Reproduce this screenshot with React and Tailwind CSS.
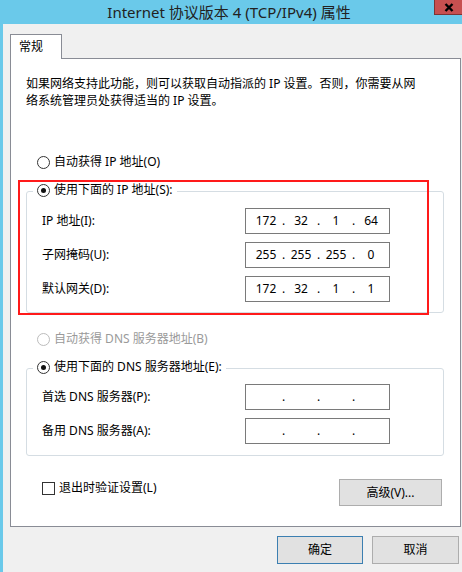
import React from 'react';

const Radio = ({ checked, disabled }) => (
  <span
    className={`w-[13px] h-[13px] rounded-full border flex items-center justify-center bg-white shrink-0 ${
      disabled ? 'border-[#bcbcbc]' : 'border-[#333333]'
    }`}
  >
    {checked && <span className="w-[5px] h-[5px] rounded-full bg-[#111111]" />}
  </span>
);

const IpBox = ({ parts }) => (
  <div className="w-[145px] h-[26px] border border-[#7a7a7a] bg-white flex items-center pl-[7px]">
    {parts.map((p, i) => (
      <React.Fragment key={i}>
        <span className="w-[26px] text-center">{p}</span>
        {i < 3 && <span className="w-[9px] text-center">.</span>}
      </React.Fragment>
    ))}
  </div>
);

const Row = ({ label, parts, first }) => (
  <div className={`flex items-center pl-[15px] pr-[53px] ${first ? '' : 'mt-[8px]'}`}>
    <span>{label}</span>
    <div className="ml-auto">
      <IpBox parts={parts} />
    </div>
  </div>
);

const GroupBox = ({ title, children, className }) => (
  <div className={`ml-[15px] mr-[16px] border border-[#d5dde3] rounded-[3px] ${className}`}>
    <div className="-mt-[10px] ml-[6px] px-[4px] bg-white w-fit h-[16px] flex items-center gap-[4px]">
      <Radio checked />
      <span>{title}</span>
    </div>
    {children}
  </div>
);

export default function App() {
  return (
    <div className="relative w-[462px] h-[572px] bg-[#6ac9ea] flex flex-col text-[12px] leading-[16px] text-black font-['Noto_Sans','Noto_Sans_CJK_SC',sans-serif]">
      <div className="h-[24px] flex items-center justify-center text-[15px] text-[#222222]">
        <span className="-ml-[4px]">Internet 协议版本 4 (TCP/IPv4) 属性</span>
        <div className="absolute top-0 right-0 w-[28px] h-[15px] bg-[#c75050] border-l border-b border-[#7d3434] flex items-center justify-center">
          <svg width="10" height="9" viewBox="0 0 10 9">
            <path d="M1.5 1 L8.5 8 M8.5 1 L1.5 8" stroke="#000" strokeWidth="2.4" />
          </svg>
        </div>
      </div>

      <div className="flex-1 ml-[3px] bg-[#f0f0f0] pl-[7px] pr-[1px] pt-[10px] flex flex-col">
        <div className="relative z-10 -mb-px w-[52px] h-[25px] bg-white border border-b-0 border-[#898c95] pl-[8px] pt-[4px]">
          常规
        </div>

        <div className="h-[469px] bg-white border border-[#898c95] flex flex-col">
          <div className="mt-[17px] pl-[15px]">
            <div>如果网络支持此功能，则可以获取自动指派的 IP 设置。否则，你需要从网</div>
            <div className="mt-[1px]">络系统管理员处获得适当的 IP 设置。</div>
          </div>

          <div className="mt-[45px] pl-[26px] h-[16px] flex items-center gap-[4px]">
            <Radio />
            <span>自动获得 IP 地址(O)</span>
          </div>

          <GroupBox title="使用下面的 IP 地址(S):" className="mt-[21px] pb-[10px]">
            <div className="mt-[10px]">
              <Row first label="IP 地址(I):" parts={['172', '32', '1', '64']} />
              <Row label="子网掩码(U):" parts={['255', '255', '255', '0']} />
              <Row label="默认网关(D):" parts={['172', '32', '1', '1']} />
            </div>
          </GroupBox>

          <div className="mt-[18px] pl-[26px] h-[16px] flex items-center gap-[4px] text-[#9a9a9a]">
            <Radio disabled />
            <span>自动获得 DNS 服务器地址(B)</span>
          </div>

          <GroupBox title="使用下面的 DNS 服务器地址(E):" className="mt-[21px] pb-[11px]">
            <div className="mt-[9px]">
              <Row first label="首选 DNS 服务器(P):" parts={['', '', '', '']} />
              <Row label="备用 DNS 服务器(A):" parts={['', '', '', '']} />
            </div>
          </GroupBox>

          <div className="mt-[23px] flex items-start pl-[31px] pr-[18px]">
            <div className="mt-[1px] flex items-center gap-[4px]">
              <span className="w-[13px] h-[13px] border border-[#333333] bg-white" />
              <span>退出时验证设置(L)</span>
            </div>
            <button className="ml-auto w-[103px] h-[27px] bg-[#e1e1e1] border border-[#adadad] flex items-center justify-center">
              高级(V)...
            </button>
          </div>
        </div>

        <div className="mt-[9px] flex justify-end gap-[9px] pr-[2px]">
          <button className="w-[86px] h-[28px] bg-[#e1e1e1] border border-[#3c7fb1] flex items-center justify-center">
            确定
          </button>
          <button className="w-[87px] h-[28px] bg-[#e1e1e1] border border-[#adadad] flex items-center justify-center">
            取消
          </button>
        </div>
      </div>

      <div className="absolute left-[18px] top-[180px] w-[411px] h-[135px] border-2 border-[#ff1a1a]" />
    </div>
  );
}
